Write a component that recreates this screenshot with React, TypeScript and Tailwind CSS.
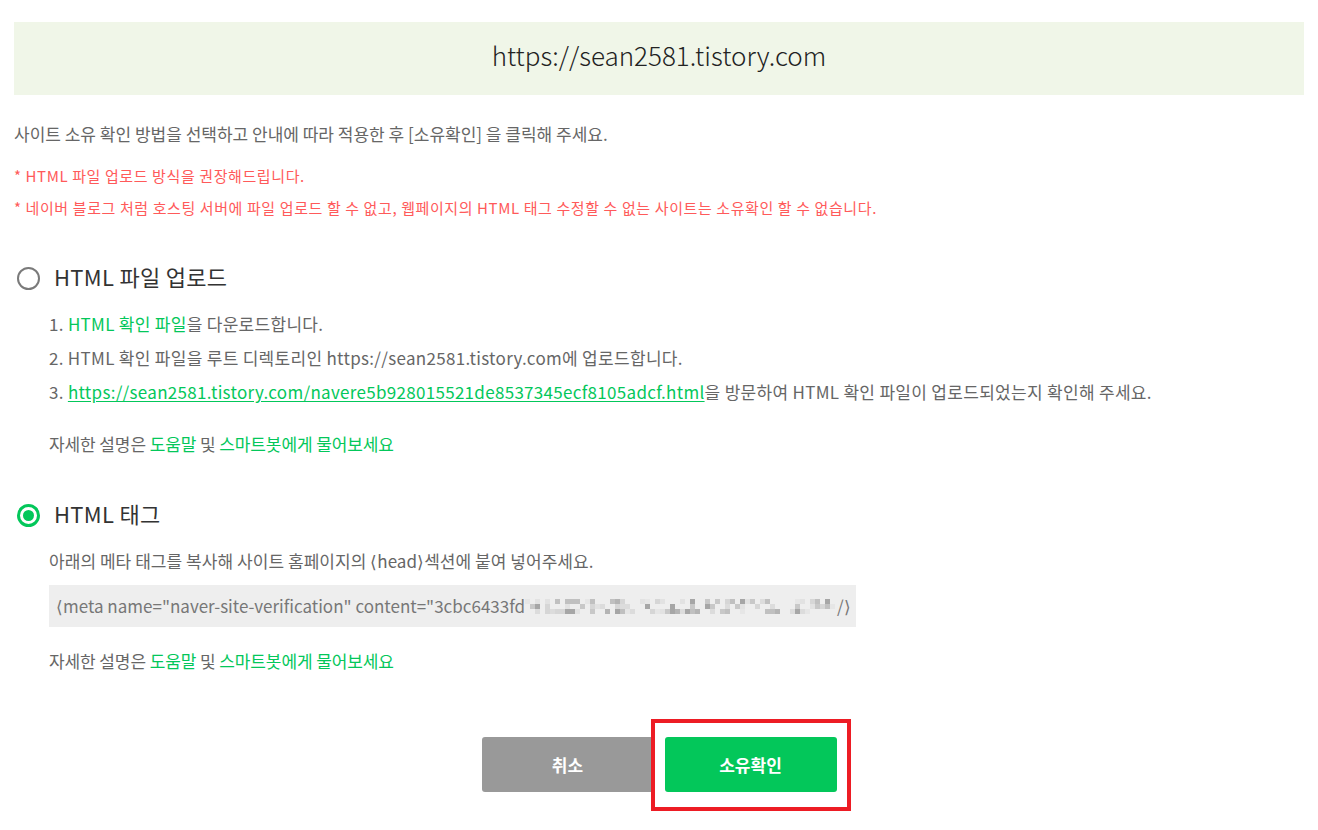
import React from "react";

const font = {
  fontFamily: '"Noto Sans CJK KR", "Noto Sans", sans-serif',
};

function Mosaic() {
  const cells: [number, number, string][] = [];
  const shades = ["#d6d6d6", "#c8c8c8", "#e2e2e2", "#b4b4b4", "#dcdcdc", "#c0c0c0", "#a6a6a6", "#e6e6e6"];
  let seed = 11;
  const rnd = () => {
    seed = (seed * 9301 + 49297) % 233280;
    return seed / 233280;
  };
  for (let x = 0; x < 310; x += 5) {
    for (let y = 0; y < 15; y += 5) {
      const r = rnd();
      if (r < 0.5) continue;
      cells.push([x, y, shades[Math.floor(rnd() * shades.length)]]);
    }
  }
  return (
    <svg width="312" height="15" viewBox="0 0 312 15" className="inline-block shrink-0">
      {cells.map(([x, y, c], i) => (
        <rect key={i} x={x} y={y} width={5} height={5} fill={c} />
      ))}
    </svg>
  );
}

function Radio({ checked }: { checked?: boolean }) {
  if (checked) {
    return (
      <span className="flex h-[23px] w-[23px] items-center justify-center rounded-full border-[3px] border-[#03c75a]">
        <span className="h-[11px] w-[11px] rounded-full bg-[#03c75a]" />
      </span>
    );
  }
  return <span className="block h-[23px] w-[23px] rounded-full border-2 border-[#7a7a7a]" />;
}

function Help() {
  return (
    <p className="text-[17px] leading-[22px] tracking-[-0.1px] text-[#666]">
      자세한 설명은 <span className="text-[#03c75a]">도움말</span> 및{" "}
      <span className="text-[#03c75a]">스마트봇에게 물어보세요</span>
    </p>
  );
}

export default function App() {
  return (
    <div className="min-h-[830px] w-[1318px] bg-white px-[14px]" style={font}>
      <div className="mt-[22px] flex h-[73px] items-center justify-center bg-[#f0f6e8] pb-[9px] text-[26px] font-light text-[#222]">
        https://sean2581.tistory.com
      </div>

      <p className="mt-[28px] text-[17px] leading-[22px] tracking-[0px] text-[#666]">
        사이트 소유 확인 방법을 선택하고 안내에 따라 적용한 후 [소유확인] 을 클릭해 주세요.
      </p>

      <div className="mt-[15px] text-[15px] leading-[32px] tracking-[0.6px] text-[#ff5a5a]">
        <p>* HTML 파일 업로드 방식을 권장해드립니다.</p>
        <p>* 네이버 블로그 처럼 호스팅 서버에 파일 업로드 할 수 없고, 웹페이지의 HTML 태그 수정할 수 없는 사이트는 소유확인 할 수 없습니다.</p>
      </div>

      <div className="mt-[39px] flex h-[30px] items-center gap-[14px] pl-[3px]">
        <Radio />
        <span className="pb-[4px] text-[22px] tracking-[0.3px] text-[#333]">HTML 파일 업로드</span>
      </div>

      <div className="mt-[14px] pl-[35px] text-[17px] leading-[34px] tracking-[0.3px] text-[#666]">
        <p>
          1. <span className="text-[#03c75a]">HTML 확인 파일</span>을 다운로드합니다.
        </p>
        <p>2. HTML 확인 파일을 루트 디렉토리인 https://sean2581.tistory.com에 업로드합니다.</p>
        <p>
          3.{" "}
          <span className="text-[#03c75a] underline underline-offset-2">
            https://sean2581.tistory.com/navere5b928015521de8537345ecf8105adcf.html
          </span>
          을 방문하여 HTML 확인 파일이 업로드되었는지 확인해 주세요.
        </p>
      </div>

      <div className="mt-[24px] pl-[35px]">
        <Help />
      </div>

      <div className="mt-[45px] flex h-[30px] items-center gap-[14px] pl-[3px]">
        <Radio checked />
        <span className="pb-[4px] text-[22px] tracking-[0.3px] text-[#333]">HTML 태그</span>
      </div>

      <div className="pl-[35px]">
        <p className="mt-[20px] text-[17px] leading-[22px] tracking-[0.05px] text-[#666]">
          아래의 메타 태그를 복사해 사이트 홈페이지의 ⟨head⟩섹션에 붙여 넣어주세요.
        </p>
        <div className="mt-[13px] flex h-[42px] w-[807px] items-center bg-[#eeeeee] pl-[7px] text-[17px] tracking-[0px] text-[#777]">
          <span className="whitespace-nowrap">⟨meta name="naver-site-verification" content="3cbc6433fd</span>
          <Mosaic />
          <span>/⟩</span>
        </div>
        <div className="mt-[23px]">
          <Help />
        </div>
      </div>

      <div className="mt-[65px] flex justify-center gap-[11px]">
        <button className="h-[55px] w-[172px] rounded-[3px] bg-[#999999] text-[17px] font-bold text-white">
          취소
        </button>
        <div className="relative">
          <button className="h-[55px] w-[172px] rounded-[3px] bg-[#03c75a] text-[17px] font-bold text-white">
            소유확인
          </button>
          <div className="pointer-events-none absolute -left-[14px] -right-[14px] -top-[18px] -bottom-[19px] border-4 border-[#ed1c24]" />
        </div>
      </div>
    </div>
  );
}
